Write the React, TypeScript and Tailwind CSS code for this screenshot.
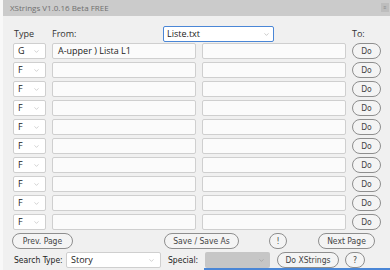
import { ChevronDown } from "lucide-react";

const ui = { fontFamily: '"Open Sans", "Noto Sans", sans-serif' };
const tah = { fontFamily: '"DejaVu Sans Condensed", "DejaVu Sans", Verdana, sans-serif' };

function Select({ value, className = "" }: { value: string; className?: string }) {
  return (
    <div
      className={`flex items-center justify-between h-[16px] rounded-[2px] border border-[#cfcfcf] bg-white pl-[4px] pr-[5px] text-[9px] text-[#222] ${className}`}
      style={ui}
    >
      <span>{value}</span>
      <ChevronDown size={7} strokeWidth={1.5} className="text-[#9a9a9a]" />
    </div>
  );
}

function Pill({ label, className = "" }: { label: string; className?: string }) {
  return (
    <div
      className={`flex items-center justify-center h-[16px] rounded-full border border-[#8e8e8e] bg-[#f4f4f4] text-[8.5px] text-[#444] ${className}`}
      style={tah}
    >
      {label}
    </div>
  );
}

function Row({ type, from }: { type: string; from?: string }) {
  return (
    <div className="flex items-center h-[16px]">
      <Select value={type} className="w-[33px]" />
      <div
        className="ml-[6px] flex items-center w-[144px] h-[16px] rounded-[2px] border border-[#cfcfcf] bg-[#fbfbfb] px-[5px] text-[9px] text-[#222]"
        style={ui}
      >
        {from}
      </div>
      <div className="ml-[6px] w-[144px] h-[16px] rounded-[2px] border border-[#cfcfcf] bg-[#fbfbfb]" />
      <Pill label="Do" className="ml-[6px] w-[29px]" />
    </div>
  );
}

export default function App() {
  return (
    <div className="flex w-[390px] h-[270px] overflow-hidden bg-[#f0f0f0]">
      {/* left window edge */}
      <div className="w-[3px] shrink-0 bg-[#f8f8f8]" />
      <div className="flex flex-col flex-1">
        {/* Title bar */}
        <div className="flex items-center justify-between h-[16px] shrink-0 bg-[#cbcbcb] pl-[7px] pr-[1px]">
          <span className="text-[8px] text-[#6f6f6f]" style={ui}>
            XStrings V1.0.16 Beta FREE
          </span>
          <div className="flex items-center justify-center w-[8px] h-[9px] mt-[-1px] bg-[#bdbdbd] text-[5px] leading-none text-[#888]">
            ≡
          </div>
        </div>

        <div className="flex flex-col pl-[10px] pt-[10px]">
          {/* Header */}
          <div className="flex items-center h-[16px] text-[9px] text-[#333]" style={ui}>
            <span className="w-[39px] pl-[1px]">Type</span>
            <span className="w-[111px]">From:</span>
            <div className="flex items-center justify-between w-[111px] h-[16px] rounded-[2px] border border-[#4a86d6] bg-white px-[3px] text-[#222]">
              <span>Liste.txt</span>
              <ChevronDown size={7} strokeWidth={1.5} className="text-[#8a8a8a]" />
            </div>
            <span className="ml-[78px]">To:</span>
          </div>

          {/* Rows */}
          <div className="flex flex-col gap-[3px] mt-[1px]">
            <Row type="G" from="A-upper ) Lista L1" />
            {Array.from({ length: 9 }).map((_, i) => (
              <Row key={i} type="F" />
            ))}
          </div>

          {/* Buttons */}
          <div className="flex items-center h-[16px] mt-[3px]">
            <Pill label="Prev. Page" className="w-[61px] ml-[-1px]" />
            <Pill label="Save / Save As" className="w-[75px] ml-[91px]" />
            <Pill label="!" className="w-[18px] ml-[30px]" />
            <Pill label="Next Page" className="w-[57px] ml-[31px]" />
          </div>

          {/* Search */}
          <div className="flex items-center h-[16px] mt-[3px] text-[8.5px] text-[#222]" style={tah}>
            <span className="w-[53px] pl-[1px]">Search Type:</span>
            <Select value="Story" className="w-[95px] h-[16px]" />
            <span className="ml-[7px] w-[37px]">Special:</span>
            <div className="flex items-center justify-end w-[65px] h-[16px] rounded-[2px] bg-[#c6c6c6] pr-[5px]">
              <ChevronDown size={7} strokeWidth={1.5} className="text-[#8a8a8a]" />
            </div>
            <Pill label="Do XStrings" className="w-[62px] ml-[7px]" />
            <Pill label="?" className="w-[20px] ml-[6px]" />
          </div>
          <div className="h-[2px] ml-[191px] shrink-0 bg-[#4a86d6]" />
        </div>
      </div>
    </div>
  );
}
